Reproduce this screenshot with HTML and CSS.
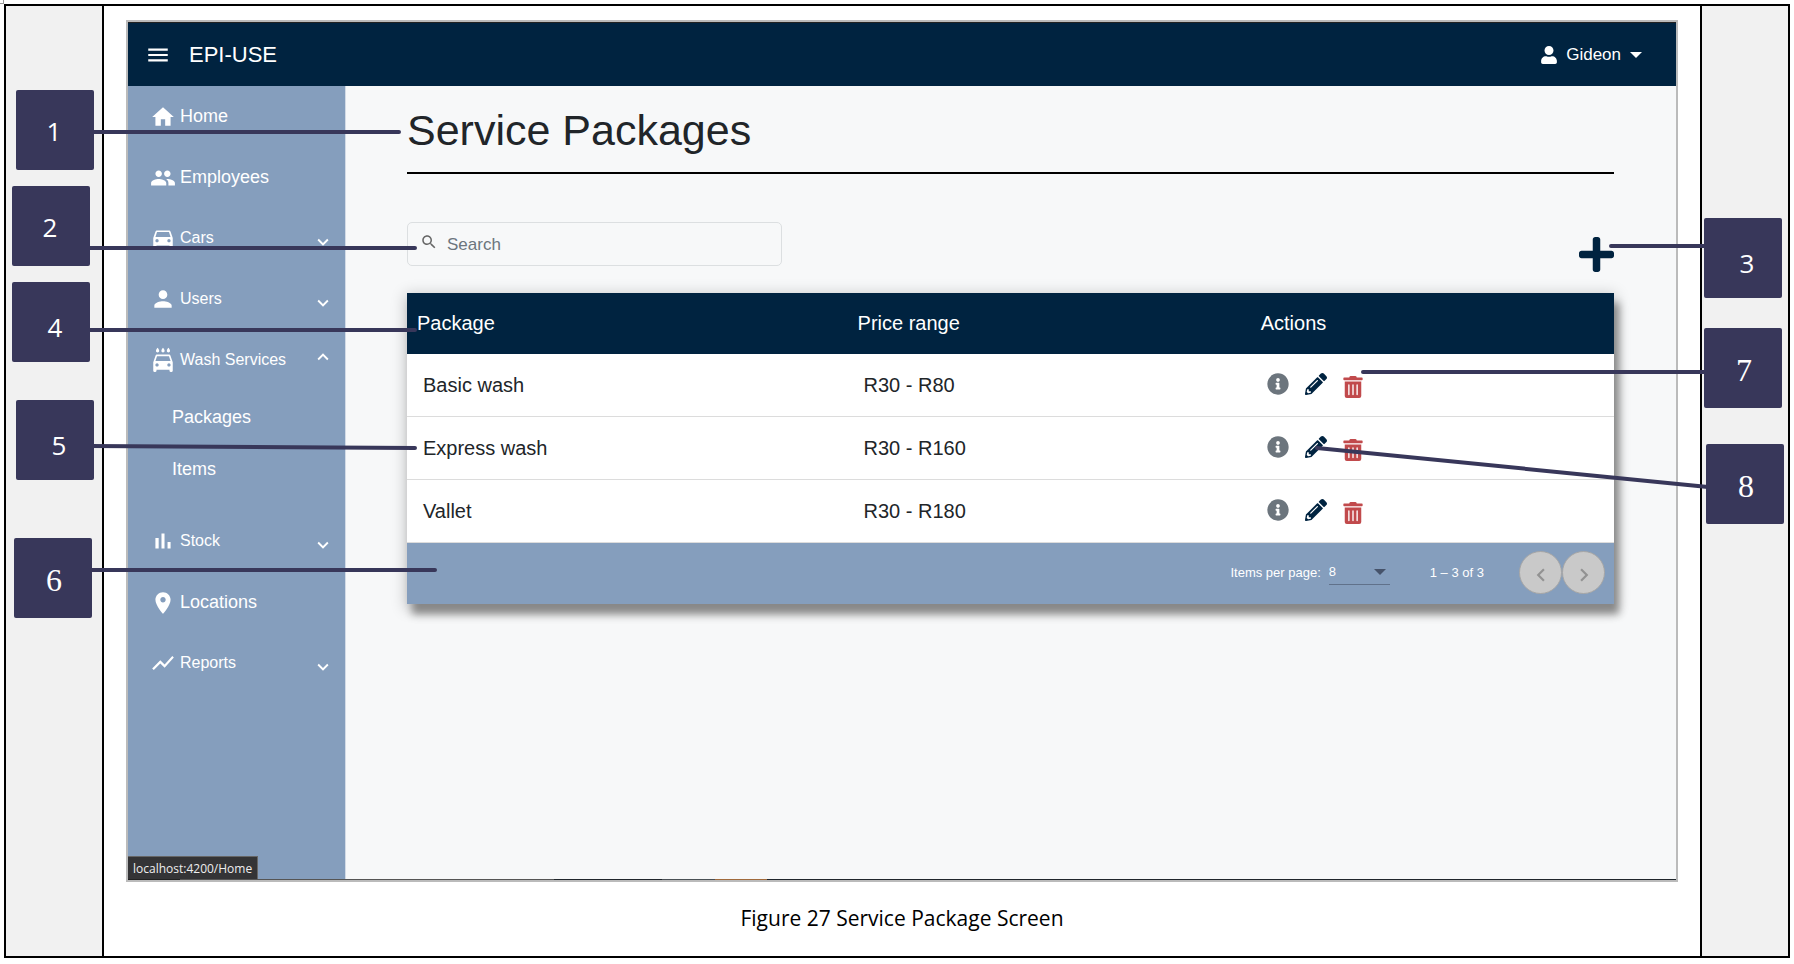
FILE: index.html
```html
<!DOCTYPE html>
<html lang="en">
<head>
<meta charset="utf-8">
<title>Figure 27 Service Package Screen</title>
<link rel="stylesheet" href="styles.css">
</head>
<body>
<svg class="sprite" aria-hidden="true">
  <symbol id="i-home" viewBox="0 0 24 24"><path d="M10 20v-6h4v6h5v-8h3L12 3 2 12h3v8z"/></symbol>
  <symbol id="i-people" viewBox="0 0 24 24"><path d="M16 11c1.66 0 2.99-1.34 2.99-3S17.66 5 16 5s-3 1.34-3 3 1.34 3 3 3zm-8 0c1.66 0 2.99-1.34 2.99-3S9.66 5 8 5 5 6.34 5 8s1.34 3 3 3zm0 2c-2.33 0-7 1.17-7 3.5V19h14v-2.5c0-2.33-4.67-3.5-7-3.5zm8 0c-.29 0-.62.02-.97.05 1.16.84 1.97 1.97 1.97 3.45V19h6v-2.5c0-2.33-4.67-3.5-7-3.5z"/></symbol>
  <symbol id="i-car" viewBox="0 0 24 24"><path d="M18.92 6.01C18.72 5.42 18.16 5 17.5 5h-11c-.66 0-1.21.42-1.42 1.01L3 12v8c0 .55.45 1 1 1h1c.55 0 1-.45 1-1v-1h12v1c0 .55.45 1 1 1h1c.55 0 1-.45 1-1v-8l-2.08-5.99zM6.5 16c-.83 0-1.5-.67-1.5-1.5S5.670 13 6.500 13s1.500.67 1.500 1.500S7.330 16 6.500 16zm11 0c-.83 0-1.500-.67-1.500-1.500s.67-1.500 1.500-1.500 1.500.67 1.500 1.500-.67 1.500-1.500 1.500zM5 11l1.500-4.500h11L19 11H5z"/></symbol>
  <symbol id="i-person" viewBox="0 0 24 24"><path d="M12 12c2.210 0 4-1.790 4-4s-1.790-4-4-4-4 1.790-4 4 1.790 4 4 4zm0 2c-2.670 0-8 1.340-8 4v2h16v-2c0-2.660-5.330-4-8-4z"/></symbol>
  <symbol id="i-wash" viewBox="0 0 24 24"><path d="M17 5c.83 0 1.500-.67 1.500-1.500 0-1-1.500-2.700-1.500-2.700s-1.500 1.700-1.500 2.700c0 .83.67 1.500 1.500 1.500zm-5 0c.83 0 1.500-.67 1.500-1.500 0-1-1.500-2.700-1.500-2.700s-1.500 1.700-1.500 2.700c0 .83.67 1.500 1.500 1.500zM7 5c.83 0 1.500-.67 1.500-1.500C8.500 2.500 7 .8 7 .8S5.500 2.500 5.500 3.500C5.500 4.330 6.170 5 7 5zm11.920 3.010C18.720 7.420 18.160 7 17.500 7h-11c-.66 0-1.210.42-1.420 1.010L3 14v8c0 .55.45 1 1 1h1c.55 0 1-.45 1-1v-1h12v1c0 .55.45 1 1 1h1c.55 0 1-.45 1-1v-8l-2.080-5.990zM6.500 18c-.83 0-1.500-.67-1.500-1.500S5.670 15 6.500 15s1.500.67 1.500 1.500S7.330 18 6.500 18zm11 0c-.83 0-1.500-.67-1.500-1.500s.67-1.500 1.500-1.500 1.500.67 1.500 1.500-.67 1.500-1.500 1.500zM5 13l1.500-4.500h11L19 13H5z"/></symbol>
  <symbol id="i-chart" viewBox="0 0 24 24"><path d="M5 9.200h3V19H5zM10.600 5h2.800v14h-2.800zm5.600 8H19v6h-2.800z"/></symbol>
  <symbol id="i-place" viewBox="0 0 24 24"><path d="M12 2C8.130 2 5 5.130 5 9c0 5.250 7 13 7 13s7-7.750 7-13c0-3.870-3.130-7-7-7zm0 9.500c-1.380 0-2.500-1.120-2.500-2.500s1.120-2.500 2.500-2.500 2.500 1.120 2.500 2.500-1.120 2.500-2.500 2.500z"/></symbol>
  <symbol id="i-trend" viewBox="0 0 24 24"><path d="M3.500 18.490l6-6.010 4 4L22 6.920l-1.410-1.410-7.090 7.970-4-4L2 16.990z"/></symbol>
  <symbol id="i-down" viewBox="0 0 24 24"><path d="M16.590 8.590L12 13.170 7.410 8.590 6 10l6 6 6-6z"/></symbol>
  <symbol id="i-up" viewBox="0 0 24 24"><path d="M12 8l-6 6 1.410 1.410L12 10.830l4.590 4.580L18 14z"/></symbol>
  <symbol id="i-left" viewBox="0 0 24 24"><path d="M15.410 7.410L14 6l-6 6 6 6 1.410-1.410L10.830 12z"/></symbol>
  <symbol id="i-right" viewBox="0 0 24 24"><path d="M10 6L8.590 7.410 13.170 12l-4.580 4.590L10 18l6-6z"/></symbol>
  <symbol id="i-menu" viewBox="0 0 24 24"><path d="M3 18h18v-2H3v2zm0-5h18v-2H3v2zm0-7v2h18V6H3z"/></symbol>
  <symbol id="i-search" viewBox="0 0 24 24"><path d="M15.500 14h-.79l-.28-.27C15.410 12.590 16 11.110 16 9.500 16 5.910 13.090 3 9.500 3S3 5.910 3 9.500 5.910 16 9.500 16c1.610 0 3.090-.59 4.230-1.570l.27.28v.79l5 4.990L20.490 19l-4.990-5zm-6 0C7.010 14 5 11.990 5 9.500S7.010 5 9.500 5 14 7.010 14 9.500 11.990 14 9.500 14z"/></symbol>
  <symbol id="i-caret" viewBox="0 0 12 6"><path d="M0 0h12L6 6z"/></symbol>
  <symbol id="i-user" viewBox="0 0 448 512"><path d="M224 256c70.700 0 128-57.300 128-128S294.700 0 224 0 96 57.300 96 128s57.300 128 128 128zm89.600 32h-16.700c-22.200 10.200-46.900 16-72.900 16s-50.600-5.800-72.900-16h-16.700C60.200 288 0 348.200 0 422.400V464c0 26.500 21.500 48 48 48h352c26.500 0 48-21.500 48-48v-41.600c0-74.200-60.200-134.400-134.400-134.400z"/></symbol>
  <symbol id="i-plus" viewBox="0 32 448 448"><path d="M416 208H272V64c0-17.670-14.330-32-32-32h-32c-17.670 0-32 14.330-32 32v144H32c-17.670 0-32 14.330-32 32v32c0 17.670 14.330 32 32 32h144v144c0 17.670 14.330 32 32 32h32c17.670 0 32-14.330 32-32V304h144c17.670 0 32-14.330 32-32v-32c0-17.670-14.330-32-32-32z"/></symbol>
  <symbol id="i-info" viewBox="0 0 512 512"><path d="M256 8C119.043 8 8 119.083 8 256c0 136.997 111.043 248 248 248s248-111.003 248-248C504 119.083 392.957 8 256 8zm0 110c23.196 0 42 18.804 42 42s-18.804 42-42 42-42-18.804-42-42 18.804-42 42-42zm56 254c0 6.627-5.373 12-12 12h-88c-6.627 0-12-5.373-12-12v-24c0-6.627 5.373-12 12-12h12v-64h-12c-6.627 0-12-5.373-12-12v-24c0-6.627 5.373-12 12-12h64c6.627 0 12 5.373 12 12v100h12c6.627 0 12 5.373 12 12v24z"/></symbol>
  <symbol id="i-pencil" viewBox="0 0 512 512"><path d="M497.900 142.100l-46.100 46.100c-4.700 4.700-12.300 4.700-17 0l-111-111c-4.700-4.700-4.700-12.300 0-17l46.100-46.100c18.700-18.700 49.100-18.700 67.900 0l60.100 60.100c18.800 18.700 18.800 49.100 0 67.900zM284.200 99.800L21.600 362.400.4 483.900c-2.900 16.400 11.400 30.600 27.800 27.800l121.500-21.300 262.600-262.600c4.700-4.700 4.700-12.300 0-17l-111-111c-4.800-4.700-12.400-4.700-17.100 0zM124.100 339.900c-5.500-5.500-5.500-14.300 0-19.800l154-154c5.500-5.500 14.300-5.500 19.800 0s5.500 14.300 0 19.800l-154 154c-5.500 5.500-14.300 5.500-19.800 0zM88 424h48v36.300l-64.500 11.300-31.100-31.100L51.700 376H88v48z"/></symbol>
  <symbol id="i-trash" viewBox="0 0 448 512"><path d="M32 464a48 48 0 0 0 48 48h288a48 48 0 0 0 48-48V128H32zm272-256a16 16 0 0 1 32 0v224a16 16 0 0 1-32 0zm-96 0a16 16 0 0 1 32 0v224a16 16 0 0 1-32 0zm-96 0a16 16 0 0 1 32 0v224a16 16 0 0 1-32 0zM432 32H312l-9.400-18.700A24 24 0 0 0 281.100 0H166.800a23.720 23.720 0 0 0-21.400 13.300L136 32H16A16 16 0 0 0 0 48v32a16 16 0 0 0 16 16h416a16 16 0 0 0 16-16V48a16 16 0 0 0-16-16z"/></symbol>
</svg>

<span class="anchor-mark"></span>
<div class="frame">
  <div class="gutter gutter-left"></div>
  <figure class="figure">
    <div class="screen">
      <header class="topbar">
        <button class="icon-btn menu-btn" aria-label="Menu"><svg><use href="#i-menu"/></svg></button>
        <a class="brand" href="#">EPI-USE</a>
        <button class="icon-btn account"><svg class="account-icon"><use href="#i-user"/></svg><span>Gideon</span><svg class="account-caret"><use href="#i-caret"/></svg></button>
      </header>
      <div class="shell">
        <nav class="sidebar">
          <a class="nav-item" href="#"><svg class="nav-icon"><use href="#i-home"/></svg>Home</a>
          <a class="nav-item" href="#"><svg class="nav-icon"><use href="#i-people"/></svg>Employees</a>
          <button class="nav-item nav-toggle"><svg class="nav-icon"><use href="#i-car"/></svg>Cars<svg class="chevron"><use href="#i-down"/></svg></button>
          <button class="nav-item nav-toggle"><svg class="nav-icon"><use href="#i-person"/></svg>Users<svg class="chevron"><use href="#i-down"/></svg></button>
          <button class="nav-item nav-toggle" aria-expanded="true"><svg class="nav-icon"><use href="#i-wash"/></svg>Wash Services<svg class="chevron chevron-up"><use href="#i-up"/></svg></button>
          <div class="subnav">
            <a class="sub-item" href="#">Packages</a>
            <a class="sub-item" href="#">Items</a>
          </div>
          <button class="nav-item nav-toggle"><svg class="nav-icon"><use href="#i-chart"/></svg>Stock<svg class="chevron"><use href="#i-down"/></svg></button>
          <a class="nav-item" href="#"><svg class="nav-icon"><use href="#i-place"/></svg>Locations</a>
          <button class="nav-item nav-toggle"><svg class="nav-icon"><use href="#i-trend"/></svg>Reports<svg class="chevron"><use href="#i-down"/></svg></button>
        </nav>
        <main class="content">
          <h1 class="title">Service Packages</h1>
          <div class="toolbar">
            <label class="search"><svg><use href="#i-search"/></svg><input type="text" placeholder="Search" aria-label="Search"></label>
            <button class="icon-btn add-btn" aria-label="Add package"><svg><use href="#i-plus"/></svg></button>
          </div>
          <div class="card">
            <table class="packages">
              <colgroup><col class="col-name"><col class="col-price"><col></colgroup>
              <thead><tr><th>Package</th><th>Price range</th><th>Actions</th></tr></thead>
              <tbody>
                <tr><td>Basic wash</td><td>R30 - R80</td><td><div class="actions"><button class="icon-btn info" aria-label="Details"><svg><use href="#i-info"/></svg></button><button class="icon-btn edit" aria-label="Edit"><svg><use href="#i-pencil"/></svg></button><button class="icon-btn remove" aria-label="Delete"><svg><use href="#i-trash"/></svg></button></div></td></tr>
                <tr><td>Express wash</td><td>R30 - R160</td><td><div class="actions"><button class="icon-btn info" aria-label="Details"><svg><use href="#i-info"/></svg></button><button class="icon-btn edit" aria-label="Edit"><svg><use href="#i-pencil"/></svg></button><button class="icon-btn remove" aria-label="Delete"><svg><use href="#i-trash"/></svg></button></div></td></tr>
                <tr><td>Vallet</td><td>R30 - R180</td><td><div class="actions"><button class="icon-btn info" aria-label="Details"><svg><use href="#i-info"/></svg></button><button class="icon-btn edit" aria-label="Edit"><svg><use href="#i-pencil"/></svg></button><button class="icon-btn remove" aria-label="Delete"><svg><use href="#i-trash"/></svg></button></div></td></tr>
              </tbody>
            </table>
            <div class="paginator">
              <label for="page-size">Items per page:</label>
              <span class="size-field"><select id="page-size"><option>8</option></select><svg><use href="#i-caret"/></svg></span>
              <span class="range">1 – 3 of 3</span>
              <div class="pager">
                <button class="page-btn" aria-label="Previous page"><svg><use href="#i-left"/></svg></button>
                <button class="page-btn" aria-label="Next page"><svg><use href="#i-right"/></svg></button>
              </div>
            </div>
          </div>
        </main>
        <div class="status">localhost:4200/Home</div>
      </div>
      <div class="screen-edge"></div>
    </div>
    <figcaption class="caption">Figure 27 Service Package Screen</figcaption>
  </figure>
  <div class="gutter gutter-right"></div>

  <svg class="leaders leaders-left" aria-hidden="true">
    <path d="M84 126H393M80 242H409M80 324H409M84 440L409 442M84 564H429"/>
  </svg>
  <svg class="leaders leaders-right" aria-hidden="true">
    <path d="M400 240H303M400 366H55M400 481L9 442"/>
  </svg>
  <span class="callout c1">1</span>
  <span class="callout c2">2</span>
  <span class="callout callout-low c3">3</span>
  <span class="callout callout-low c4">4</span>
  <span class="callout callout-low c5">5</span>
  <span class="callout callout-serif c6">6</span>
  <span class="callout callout-serif c7">7</span>
  <span class="callout callout-serif c8">8</span>
</div>
</body>
</html>
```
FILE: styles.css
```css
* { box-sizing: border-box; }

body {
  margin: 0;
  padding: 4px 4px 6px;
  background: #fff;
  color: #212529;
  font-family: "Liberation Sans", Arial, sans-serif;
}

svg { display: block; fill: currentColor; }
.sprite { position: absolute; width: 0; height: 0; }
a { color: inherit; text-decoration: none; }
button, input, select { font: inherit; color: inherit; }

.icon-btn {
  display: flex;
  align-items: center;
  padding: 0;
  border: 0;
  background: none;
}

/* Document table */
.anchor-mark {
  position: absolute;
  top: 0;
  left: 0;
  width: 4px;
  height: 4px;
  border: solid #999;
  border-width: 0 1px 1px 0;
}
.frame {
  position: relative;
  display: flex;
  min-height: calc(100vh - 10px);
  border: 2px solid #000;
}
.gutter { flex: none; background: #f1f1f1; }
.gutter-left { width: 98px; border-right: 2px solid #000; }
.gutter-right { width: 88px; border-left: 2px solid #000; }
.figure {
  flex: 1;
  display: flex;
  flex-direction: column;
  min-width: 0;
  margin: 0;
  padding: 14px 22px 0;
}
.caption {
  padding: 24px 0 26px;
  color: #000;
  font-family: "Open Sans", "Noto Sans", sans-serif;
  font-size: 21px;
  line-height: 24px;
  text-align: center;
}

/* Application screen */
.screen {
  flex: 1;
  display: flex;
  flex-direction: column;
  border: 2px solid #bbb;
}
.screen-edge {
  height: 1px;
  background: linear-gradient(90deg, #222 52px, #555 52px 426px, #20262c 426px 534px, #4a5055 534px 587px, #a06a3c 587px 639px, #20262c 639px);
}
.topbar {
  display: flex;
  align-items: center;
  height: 64px;
  padding: 0 34px 0 17px;
  border-top: 1px solid #222;
  background: #002340;
  color: #fff;
}
.menu-btn svg { width: 26px; height: 26px; }
.brand { margin-left: 18px; font-size: 22px; line-height: 28px; }
.account { gap: 9px; margin-left: auto; font-size: 17px; line-height: 24px; }
.account-icon { width: 16px; height: 18px; }
.account-caret { width: 12px; height: 6px; }

.shell { position: relative; flex: 1; display: flex; background: #f7f8f9; }
.sidebar {
  flex: none;
  width: 218px;
  border-right: 1px solid #d3dbe6;
  background: #859ebd;
  color: #fff;
  font-size: 18px;
}
.nav-item {
  display: flex;
  align-items: center;
  gap: 4px;
  width: 100%;
  height: 61px;
  padding: 0 11px 0 22px;
  border: 0;
  background: none;
}
.nav-toggle { padding-bottom: 2px; font-size: 16px; }
.nav-icon { width: 26px; height: 26px; }
.chevron { width: 22px; height: 22px; margin: 8px 0 0 auto; }
.chevron-up { margin-top: -6px; }
.subnav { padding-bottom: 16px; }
.sub-item { display: flex; align-items: center; height: 52px; padding-left: 44px; }
.status {
  position: absolute;
  bottom: 0;
  left: 0;
  padding: 3px 5px 2px;
  border: solid #666;
  border-width: 1px 1px 0 0;
  background: #343436;
  color: #eee;
  font-family: "Open Sans", "Noto Sans", sans-serif;
  font-size: 12px;
  line-height: 17px;
}

.content { flex: 1; min-width: 0; padding: 18px 62px 0 61px; }
.title {
  margin: 0 0 48px;
  padding-bottom: 16px;
  border-bottom: 2px solid #000;
  font-size: 43px;
  font-weight: 400;
  line-height: 52px;
}
.toolbar {
  display: flex;
  align-items: flex-start;
  justify-content: space-between;
  height: 50px;
  margin-bottom: 21px;
}
.search {
  display: flex;
  align-items: center;
  width: 375px;
  height: 44px;
  padding: 0 12px;
  border: 1px solid #dcdfe1;
  border-radius: 5px;
  color: #666;
}
.search svg { flex: none; width: 18px; height: 18px; margin-bottom: 4px; }
.search input {
  flex: 1;
  min-width: 0;
  padding: 2px 0 0 9px;
  border: 0;
  outline: 0;
  background: none;
  font-size: 17px;
}
.search input::placeholder { color: #6c757d; opacity: 1; }
.add-btn { align-self: flex-end; color: #002340; }
.add-btn svg { width: 35px; height: 35px; }

.card {
  background: #fff;
  box-shadow: 5px 10px 8px #888, 0 3px 14px 2px rgba(0, 0, 0, .2);
}
.packages {
  width: 100%;
  border-collapse: separate;
  border-spacing: 0;
  table-layout: fixed;
  font-size: 20px;
  line-height: 24px;
}
.col-name { width: 36.5%; }
.col-price { width: 33.4%; }
.packages th {
  height: 61px;
  padding: 0 10px 2px;
  background: #002340;
  color: #fff;
  font-weight: 400;
  text-align: left;
}
.packages td { height: 63px; padding: 0 16px; border-bottom: 1px solid #dcdcdc; }
.actions { display: flex; align-items: center; gap: 16px; padding-bottom: 2px; }
.info { color: #6c757d; }
.edit { color: #002340; }
.remove { color: #c14a4c; }
.actions svg { width: 22px; height: 22px; }
.actions .remove svg { width: 20px; margin-top: 6px; }

.paginator {
  display: flex;
  align-items: center;
  justify-content: flex-end;
  height: 61px;
  padding: 0 9px 2px 0;
  background: #859ebd;
  color: #fff;
  font-size: 13px;
  line-height: 20px;
}
.size-field { position: relative; margin: 0 40px 0 8px; }
.size-field select {
  width: 61px;
  height: 25px;
  padding: 0;
  border: 0;
  border-bottom: 1px solid #60718a;
  border-radius: 0;
  background: none;
  appearance: none;
}
.size-field svg {
  position: absolute;
  top: 9px;
  right: 4px;
  width: 12px;
  height: 6px;
  color: #46536a;
  pointer-events: none;
}
.pager { display: flex; margin-left: 35px; }
.page-btn {
  display: grid;
  place-items: center;
  width: 43px;
  height: 43px;
  padding: 5px 0 0;
  border: 1px solid #a6a6a6;
  border-radius: 50%;
  background: #c9c9c9;
  color: #929292;
}
.page-btn svg { width: 26px; height: 26px; }

/* Numbered annotations */
.leaders {
  position: absolute;
  top: 0;
  width: 480px;
  height: 600px;
  fill: none;
  stroke: #38375a;
  stroke-width: 4;
  stroke-linecap: round;
  pointer-events: none;
}
.leaders-left { left: 0; }
.leaders-right { right: 0; }
.callout {
  position: absolute;
  display: grid;
  place-items: center;
  width: 78px;
  height: 80px;
  padding: 2px 2px 0 0;
  border-radius: 2px;
  background: #38375a;
  color: #fff;
  font-family: "Open Sans", "Noto Sans", sans-serif;
  font-size: 26px;
  line-height: 32px;
}
.callout-low { padding: 10px 0 0 8px; }
.callout-serif {
  padding: 4px 0 0 2px;
  font-family: "Liberation Serif", "Times New Roman", serif;
  font-size: 32px;
}
.c1 { top: 84px; left: 10px; }
.c2 { top: 180px; left: 6px; }
.c3 { top: 212px; right: 6px; }
.c4 { top: 276px; left: 6px; }
.c5 { top: 394px; left: 10px; }
.c6 { top: 532px; left: 8px; }
.c7 { top: 322px; right: 6px; }
.c8 { top: 438px; right: 4px; }
```
